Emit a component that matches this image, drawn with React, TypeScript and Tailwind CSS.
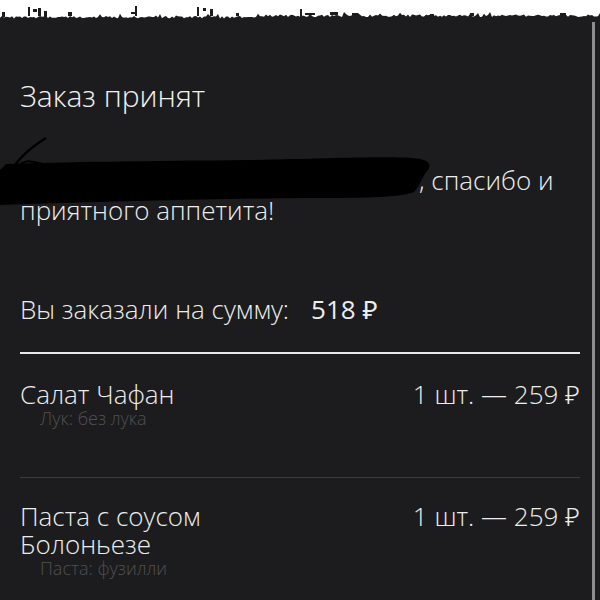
const tornPath = (() => {
  // jagged torn-paper edge, deterministic
  let seed = 11;
  const rnd = () => {
    seed = (seed * 9301 + 49297) % 233280;
    return seed / 233280;
  };
  let d = "M0 0 L600 0 L600 16";
  for (let x = 600; x >= 0; x -= 2) {
    const base = x < 260 ? 18.5 : 17;
    const y = base - rnd() * 2.5 - (rnd() > 0.9 ? 2.5 : 0);
    d += ` L${x} ${y.toFixed(1)}`;
  }
  return d + " Z";
})();

// small dark flecks above the tear
const specks = [
  [2, 12, 3, 5], [28, 7, 2, 9], [33, 9, 4, 3], [38, 8, 3, 8], [44, 11, 3, 6],
  [68, 12, 4, 4], [135, 6, 2, 10], [131, 12, 5, 2], [197, 7, 2, 9], [203, 8, 3, 3],
  [210, 9, 3, 7], [236, 13, 3, 3], [300, 9, 2, 8], [305, 13, 10, 2], [330, 12, 8, 3],
  [352, 13, 6, 3], [430, 14, 4, 2], [470, 13, 4, 3], [560, 13, 6, 3],
];

function TornEdge() {
  return (
    <svg width="600" height="22" viewBox="0 0 600 22" className="block shrink-0">
      <rect x="0" y="0" width="600" height="22" fill="#1c1c1e" />
      <path d={tornPath} fill="#ffffff" />
      {specks.map(([x, y, w, h], i) => (
        <rect key={i} x={x} y={y} width={w} height={h} fill="#1c1c1e" />
      ))}
    </svg>
  );
}

// svg x == page x, svg y + 134 == page y
function Redaction() {
  return (
    <span className="relative inline-block w-[399px] h-[1px] align-baseline">
      <svg
        width="440"
        height="80"
        viewBox="0 0 440 80"
        className="absolute left-[-20px] top-[-55px] pointer-events-none"
      >
        <path
          d="M6 30 C60 28 150 27 250 26 C320 25 380 22 412 24 C428 25 432 30 428 36 C422 42 420 52 414 58 C400 64 360 64 300 64 C220 65 120 67 0 71 L0 36 Z"
          fill="#000"
        />
        <path d="M46 4 C30 14 16 26 10 40 C6 48 6 56 10 64" stroke="#000" strokeWidth="2.5" fill="none" />
        <path d="M18 32 C26 24 34 28 42 30" stroke="#000" strokeWidth="2" fill="none" />
        <path d="M2 48 C14 44 22 46 30 48" stroke="#000" strokeWidth="3" fill="none" />
        <path d="M0 58 C12 54 24 56 34 58" stroke="#000" strokeWidth="3" fill="none" />
        <path d="M0 68 C14 64 24 66 36 68" stroke="#000" strokeWidth="2.5" fill="none" />
      </svg>
    </span>
  );
}

function Item({ name, option, qty }: { name: string[]; option: string; qty: string }) {
  return (
    <div className="flex justify-between">
      <div className="flex flex-col">
        {name.map((l) => (
          <span key={l} className="text-[26px] leading-[28px] font-light text-[#ededed]">{l}</span>
        ))}
        <span className="pl-[20px] text-[18px] leading-[20px] font-light text-[#505052]">{option}</span>
      </div>
      <span className="text-[26px] leading-[28px] font-light text-[#ededed] whitespace-nowrap">{qty}</span>
    </div>
  );
}

export default function App() {
  return (
    <div
      className="w-[600px] h-[600px] overflow-hidden bg-[#1c1c1e] flex flex-col"
      style={{ fontFamily: '"Open Sans", "Noto Sans", sans-serif' }}
    >
      <TornEdge />
      <div className="flex flex-1">
        <div className="w-[592px] pl-[20px] pr-[12px] pt-[56px] flex flex-col">
          <h1 className="text-[30px] leading-[36px] font-light text-[#f2f2f2]">Заказ принят</h1>

          <p className="mt-[51px] text-[26px] leading-[30px] font-light text-[#ededed]">
            <Redaction />, спасибо и
            <br />
            приятного аппетита!
          </p>

          <div className="mt-[69px] text-[26px] leading-[30px] font-light text-[#ededed]">
            Вы заказали на сумму:
            <span className="ml-[22px] font-normal">518 ₽</span>
          </div>

          <div className="mt-[28px] h-[2px] bg-[#e8e8e8]" />

          <div className="mt-[26px]">
            <Item name={["Салат Чафан"]} option="Лук: без лука" qty="1 шт. — 259 ₽" />
          </div>

          <div className="mt-[49px] h-[1px] bg-[#3c3c3e]" />

          <div className="mt-[24px]">
            <Item name={["Паста с соусом", "Болоньезе"]} option="Паста: фузилли" qty="1 шт. — 259 ₽" />
          </div>
        </div>
        <div className="w-[3px] bg-[#8d8d8d]" />
      </div>
    </div>
  );
}
